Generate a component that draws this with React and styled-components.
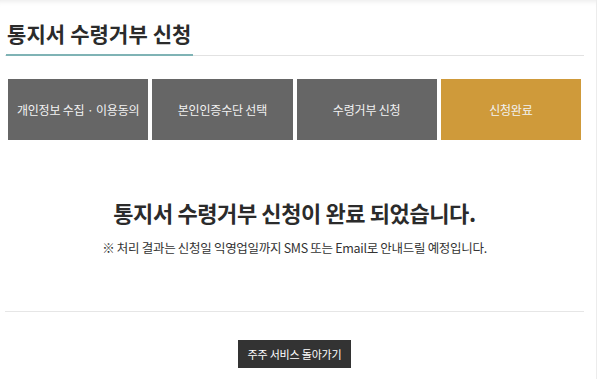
import React from 'react';
import styled, {createGlobalStyle} from 'styled-components';

const GlobalStyle = createGlobalStyle`
body {
  margin: 0;
  background: #fff;
  font-family: "Noto Sans CJK KR", "Noto Sans", sans-serif;
  color: #333;
}
`

const Page = styled.div`
width: 597px;
height: 379px;
box-sizing: border-box;
border-right: 1px solid #ececec;
box-shadow: inset 0 6px 6px -6px rgba(0,0,0,0.12);
padding: 16px 12px 0 5px;
overflow: hidden;
`

const TitleBar = styled.div`
border-bottom: 1px solid #e2e2e2;
`

const Title = styled.h2`
display: inline-block;
margin: 0 0 -1px 1px;
padding: 0 1px 4px 1px;
font-size: 21px;
font-weight: 700;
color: #2b2b2b;
letter-spacing: 0.1px;
border-bottom: 2px solid #7fb3b5;
line-height: 34px;
`

const Steps = styled.ol`
display: grid;
grid-template-columns: repeat(4, 1fr);
gap: 4px;
list-style: none;
margin: 23px 3px 0 3px;
padding: 0;
`

const Step = styled.li`
height: 61px;
display: flex;
align-items: center;
justify-content: center;
font-size: 12px;
letter-spacing: -0.2px;
color: #f2f2f2;
background: ${p => (p.$active ? '#cf9a3a' : '#666')};
`

const Result = styled.section`
display: flex;
flex-direction: column;
align-items: center;
padding: 56px 0 0;
height: 172px;
box-sizing: border-box;
border-bottom: 1px solid #e6e6e6;
`

const Heading = styled.h3`
margin: 0;
font-size: 22px;
font-weight: 700;
color: #2b2b2b;
letter-spacing: -0.4px;
line-height: 32px;
`

const Note = styled.p`
margin: 10px 0 0;
font-size: 12.5px;
color: #333;
letter-spacing: -0.3px;
`

const Footer = styled.div`
display: flex;
justify-content: center;
padding-top: 28px;
`

const Button = styled.button`
background: #333;
color: #fff;
border: none;
height: 28px;
padding: 0 10px;
font-family: inherit;
font-size: 11px;
letter-spacing: -0.2px;
cursor: pointer;
`

const steps = ['개인정보 수집 · 이용동의', '본인인증수단 선택', '수령거부 신청', '신청완료'];

export default function App() {
  return (
    <Page>
      <GlobalStyle />
      <TitleBar>
        <Title>통지서 수령거부 신청</Title>
      </TitleBar>
      <Steps>
        {steps.map((s, i) => (
          <Step key={s} $active={i === steps.length - 1}>{s}</Step>
        ))}
      </Steps>
      <Result>
        <Heading>통지서 수령거부 신청이 완료 되었습니다.</Heading>
        <Note>※ 처리 결과는 신청일 익영업일까지 SMS 또는 Email로 안내드릴 예정입니다.</Note>
      </Result>
      <Footer>
        <Button>주주 서비스 돌아가기</Button>
      </Footer>
    </Page>
  );
}
